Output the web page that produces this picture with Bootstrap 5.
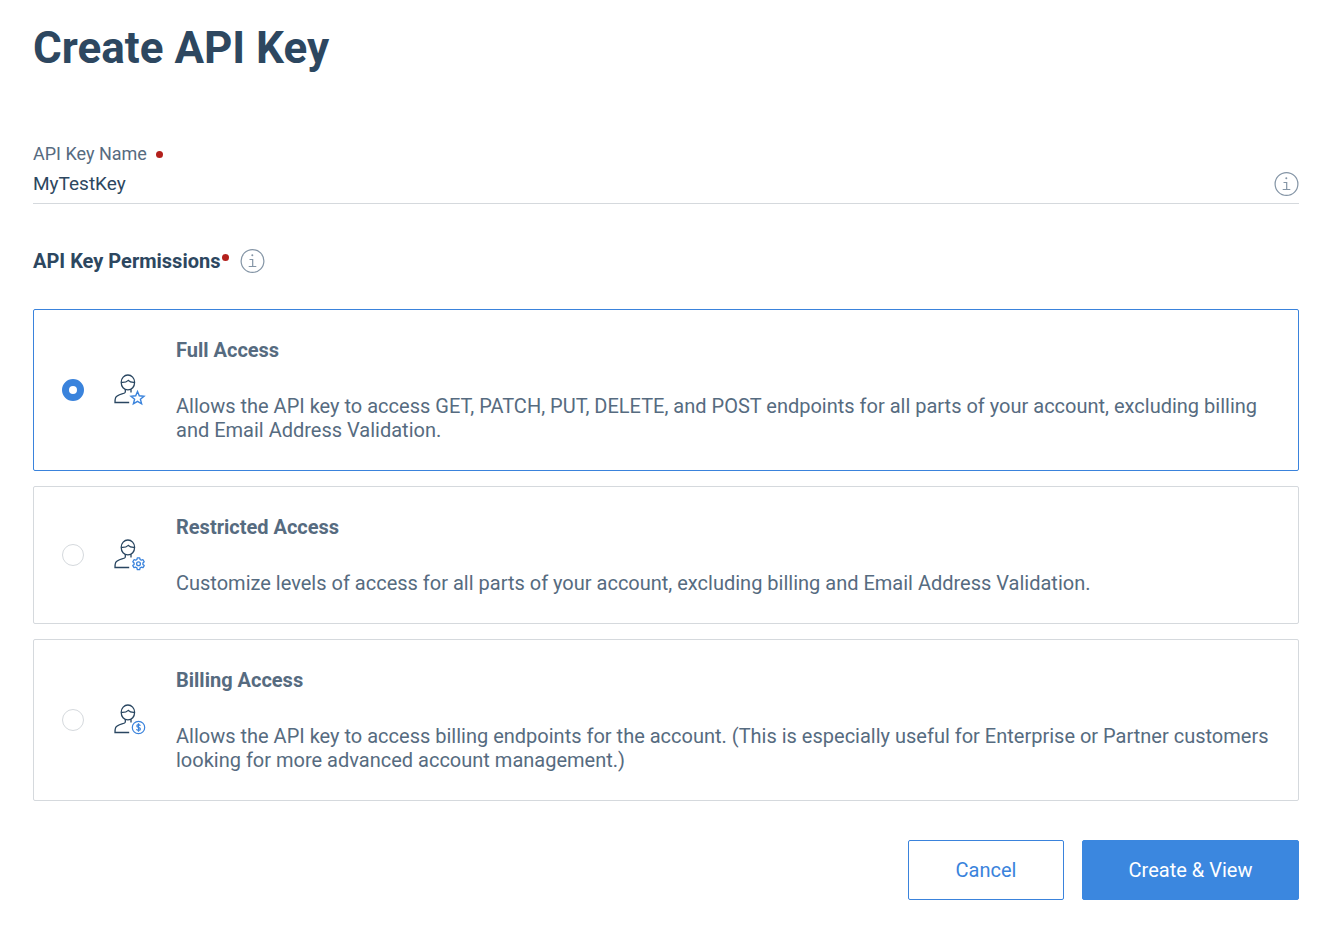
<!DOCTYPE html>
<html lang="en">
<head>
<meta charset="utf-8">
<meta name="viewport" content="width=device-width, initial-scale=1">
<title>Create API Key</title>
<link href="https://cdn.jsdelivr.net/npm/bootstrap@5.3.0/dist/css/bootstrap.min.css" rel="stylesheet">
<style>
  :root { --ink: #2d4760; --slate: #566b80; --blue: #3a83dc; --line: #d5d9dd; }
  body { font-family: Roboto, sans-serif; font-size: 20px; line-height: 24px; color: var(--ink); background: #fff; }
  .page { padding: 20px 23px 26px 33px; }
  .page-title { font-size: 44px; line-height: 56px; font-weight: 700; margin-bottom: 66px; }
  .field-label { font-size: 18px; line-height: 24px; color: var(--slate); gap: 9px; }
  .dot { width: 7px; height: 7px; background: #b3201c; }
  .field { border-bottom: 1px solid var(--line); padding-bottom: 5px; margin-bottom: 44px; }
  .field input { color: var(--ink); line-height: 26px; font-size: 19px; }
  .info { color: #8394a5; width: 26px; height: 26px; }
  .section-title { font-size: 20px; line-height: 26px; font-weight: 700; margin-bottom: 35px; gap: 2px; }
  .options { display: grid; gap: 15px; margin-bottom: 39px; }
  .option { border: 1px solid var(--line); border-radius: 2px; padding: 28px; color: var(--slate); cursor: pointer; }
  .option:has(:checked) { border-color: var(--blue); }
  .option .form-check-input { width: 22px; height: 22px; margin: 0 30px 0 0; border-color: var(--line); }
  .option .form-check-input:checked { border: 7px solid var(--blue); background: #fff; }
  .option svg { width: 32px; height: 32px; margin-right: 30px; }
  .option-name { margin-bottom: 32px; font-weight: 700; }
  .actions { gap: 18px; }
  .action { height: 60px; font-size: 20px; border-radius: 2px; --bs-btn-border-color: var(--blue); --bs-btn-color: var(--blue); }
  .action-cancel { width: 156px; }
  .action-create { width: 217px; --bs-btn-bg: #3b87df; --bs-btn-border-color: #3b87df; --bs-btn-color: #fff; }
</style>
</head>
<body>
<svg class="d-none" aria-hidden="true">
  <symbol id="info" viewBox="0 0 26 26">
    <g fill="none" stroke="currentColor" stroke-width="1.2">
      <circle cx="13.500" cy="13" r="11.4"/>
      <path d="M10.500 11.500h3.200v7M9.700 18.500h7.600"/>
    </g>
    <circle cx="13.300" cy="7.300" r="1" fill="currentColor"/>
  </symbol>
  <symbol id="person" viewBox="0 0 32 32">
    <g fill="none" stroke="#294661" stroke-width="1.3">
      <path d="M7.2 8.2a6.7 7.2 0 0 1 13.4 0c0 4.500-2.700 7.700-6.700 7.700s-6.700-3.200-6.700-7.700z"/>
      <path d="M7.300 8.400c3.200.3 5.200-.3 7-2 1.300 1.500 3.300 2.200 6.200 2M11.300 15.500v2.700c-.2 1.800-8.200 1.800-9.700 5.600-.5 1.300-.6 2.800-.6 4.700h14.200M17 15.300v3.200"/>
    </g>
  </symbol>
</svg>

<main class="page">
  <h1 class="page-title">Create API Key</h1>
  <form>
    <label class="field-label d-flex align-items-center" for="keyName">API Key Name <span class="dot rounded-circle"></span></label>
    <div class="field d-flex align-items-center mt-1">
      <input class="form-control-plaintext p-0 flex-grow-1" id="keyName" type="text" value="MyTestKey">
      <svg class="info flex-shrink-0" role="img" aria-label="Name help"><use href="#info"/></svg>
    </div>

    <fieldset>
      <legend class="section-title d-flex align-items-center">API Key Permissions<span class="dot rounded-circle mb-2 me-2"></span><svg class="info" role="img" aria-label="Permissions help"><use href="#info"/></svg></legend>
      <div class="options">
        <label class="option d-flex align-items-center">
          <input class="form-check-input flex-shrink-0" type="radio" name="access" checked>
          <svg class="flex-shrink-0" viewBox="0 0 32 32" aria-hidden="true"><use href="#person"/>
            <path d="M23.500 17.500l1.800 4.300 4.700.4-3.600 3 1.200 4.600-4.100-2.500-4.100 2.500 1.200-4.600-3.600-3 4.700-.4z" fill="none" stroke="#3a83dc" stroke-width="1.400"/></svg>
          <span><strong class="option-name d-block">Full Access</strong>
          <span class="d-block">Allows the API key to access GET, PATCH, PUT, DELETE, and POST endpoints for all parts of your account, excluding billing and Email Address Validation.</span></span>
        </label>
        <label class="option d-flex align-items-center">
          <input class="form-check-input flex-shrink-0" type="radio" name="access">
          <svg class="flex-shrink-0" viewBox="0 0 32 32" aria-hidden="true"><use href="#person"/>
            <g fill="none" stroke="#3a83dc" stroke-width="1.300" stroke-linejoin="round">
              <path d="M23.300 18.800h2.400l.4 1.700 1.200.7 1.700-.5 1.200 2.100-1.300 1.200v1.400l1.300 1.200-1.200 2.100-1.700-.5-1.200.7-.4 1.700h-2.400l-.4-1.700-1.200-.7-1.700.5-1.200-2.100 1.300-1.200V24l-1.300-1.200 1.200-2.100 1.700.5 1.200-.7z"/>
              <circle cx="24.500" cy="24.700" r="1.900"/></g></svg>
          <span><strong class="option-name d-block">Restricted Access</strong>
          <span class="d-block">Customize levels of access for all parts of your account, excluding billing and Email Address Validation.</span></span>
        </label>
        <label class="option d-flex align-items-center">
          <input class="form-check-input flex-shrink-0" type="radio" name="access">
          <svg class="flex-shrink-0" viewBox="0 0 32 32" aria-hidden="true"><use href="#person"/>
            <g fill="none" stroke="#3a83dc" stroke-width="1.200">
              <circle cx="24.500" cy="23.500" r="6.200" fill="#fff"/>
              <path d="M26.300 21.800c-.3-1.600-3.500-1.600-3.500.1 0 1.800 3.600 1.200 3.600 3.100 0 1.800-3.500 1.800-3.800 0M24.500 19.300v8.400"/></g></svg>
          <span><strong class="option-name d-block">Billing Access</strong>
          <span class="d-block">Allows the API key to access billing endpoints for the account. (This is especially useful for Enterprise or Partner customers looking for more advanced account management.)</span></span>
        </label>
      </div>
    </fieldset>

    <div class="actions d-flex justify-content-end">
      <button class="action action-cancel btn" type="button">Cancel</button>
      <button class="action action-create btn" type="submit">Create &amp; View</button>
    </div>
  </form>
</main>
<script src="https://cdn.jsdelivr.net/npm/bootstrap@5.3.0/dist/js/bootstrap.bundle.min.js"></script>
</body>
</html>
